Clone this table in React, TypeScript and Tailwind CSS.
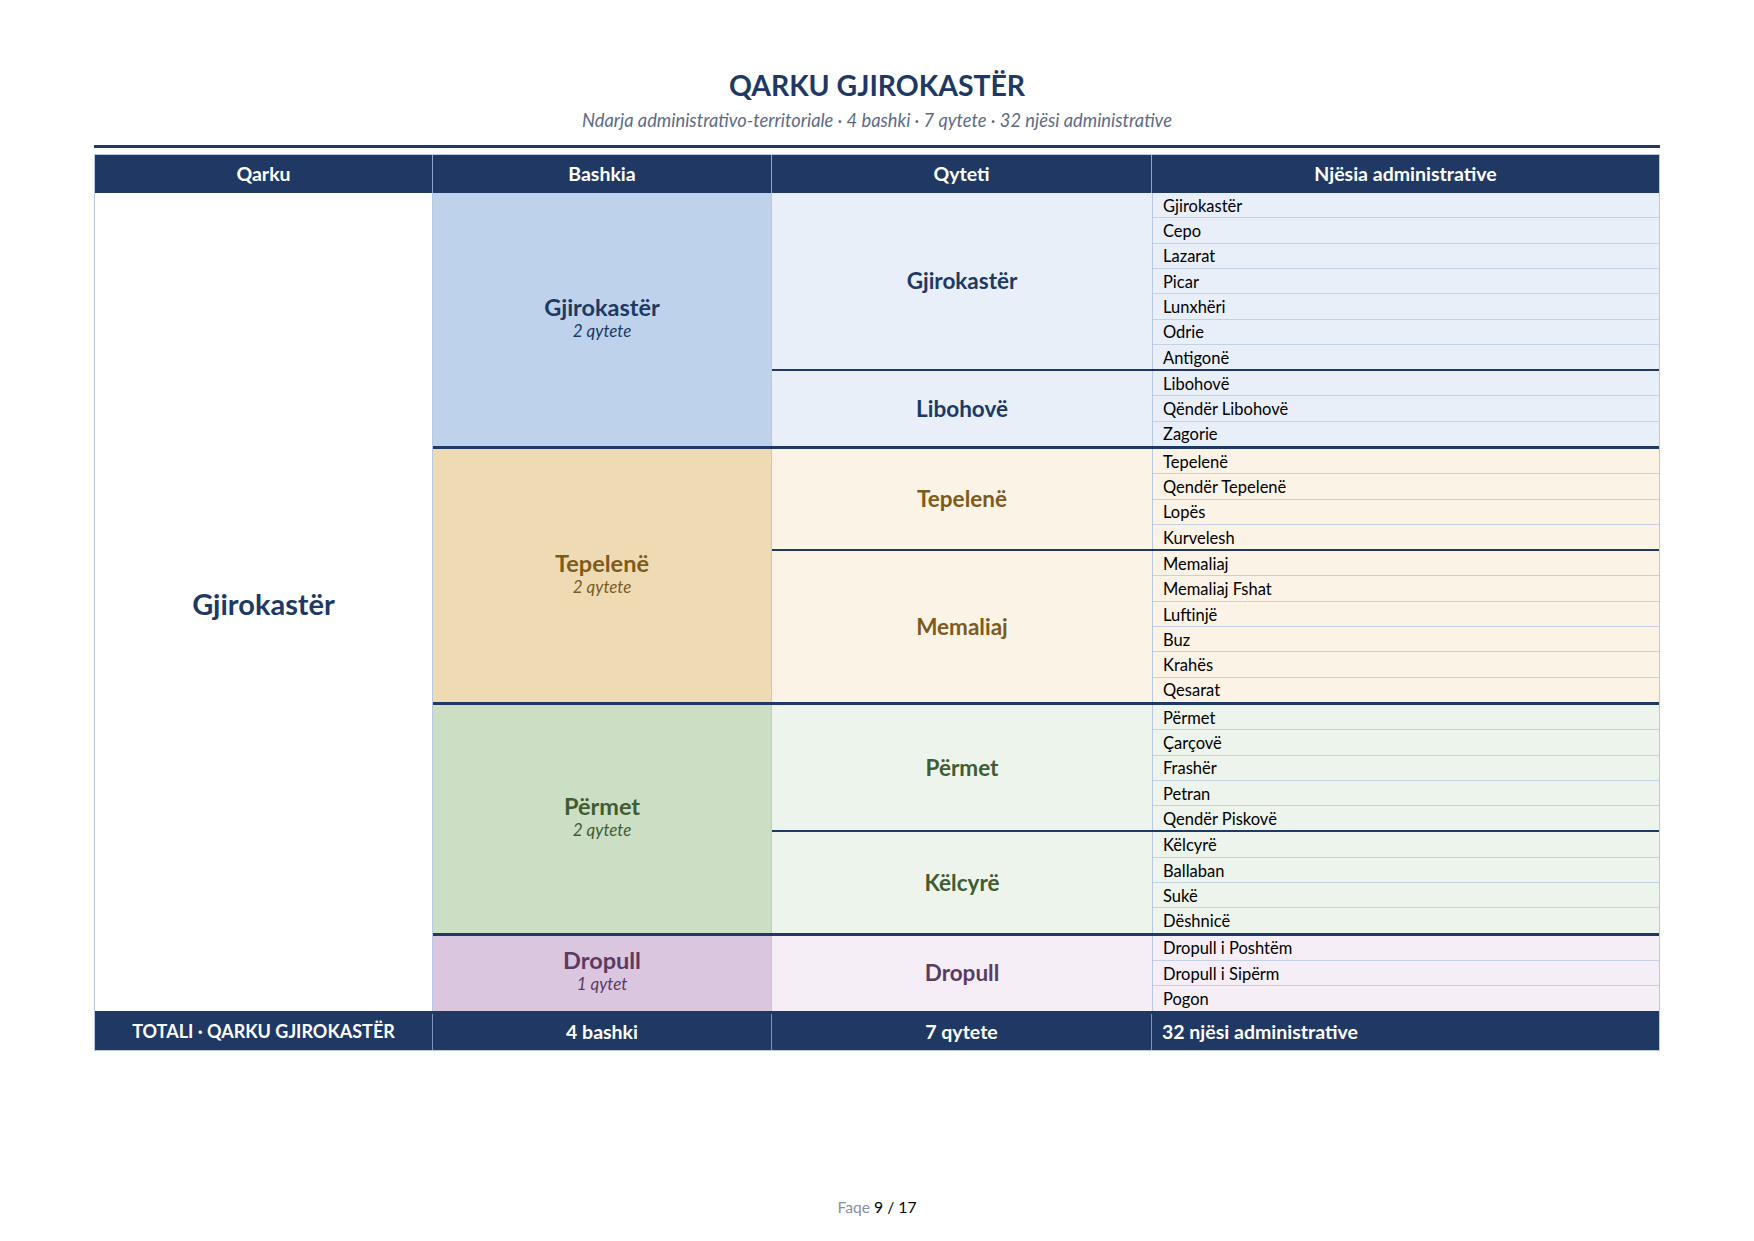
import React from 'react';
import clsx from 'clsx';

interface Theme {
  bashkia: string;
  city: string;
  rows: string;
}

interface City {
  name: string;
  units: string[];
}

interface Bashkia {
  name: string;
  count: string;
  theme: Theme;
  cities: City[];
}

const blue: Theme = {
  bashkia: 'bg-[#bed3eb] text-[#203864]',
  city: 'bg-[#e8eff9] text-[#203864]',
  rows: 'bg-[#e8eff9]',
};
const sand: Theme = {
  bashkia: 'bg-[#eedbb4] text-[#7c5b1c]',
  city: 'bg-[#fbf3e6] text-[#7c5b1c]',
  rows: 'bg-[#fbf3e6]',
};
const green: Theme = {
  bashkia: 'bg-[#ccdfc5] text-[#3f5c33]',
  city: 'bg-[#edf4eb] text-[#3f5c33]',
  rows: 'bg-[#edf4eb]',
};
const violet: Theme = {
  bashkia: 'bg-[#dbc6e0] text-[#5b3b62]',
  city: 'bg-[#f5eef6] text-[#5b3b62]',
  rows: 'bg-[#f5eef6]',
};

const bashkite: Bashkia[] = [
  {
    name: 'Gjirokastër',
    count: '2 qytete',
    theme: blue,
    cities: [
      { name: 'Gjirokastër', units: ['Gjirokastër', 'Cepo', 'Lazarat', 'Picar', 'Lunxhëri', 'Odrie', 'Antigonë'] },
      { name: 'Libohovë', units: ['Libohovë', 'Qëndër Libohovë', 'Zagorie'] },
    ],
  },
  {
    name: 'Tepelenë',
    count: '2 qytete',
    theme: sand,
    cities: [
      { name: 'Tepelenë', units: ['Tepelenë', 'Qendër Tepelenë', 'Lopës', 'Kurvelesh'] },
      { name: 'Memaliaj', units: ['Memaliaj', 'Memaliaj Fshat', 'Luftinjë', 'Buz', 'Krahës', 'Qesarat'] },
    ],
  },
  {
    name: 'Përmet',
    count: '2 qytete',
    theme: green,
    cities: [
      { name: 'Përmet', units: ['Përmet', 'Çarçovë', 'Frashër', 'Petran', 'Qendër Piskovë'] },
      { name: 'Këlcyrë', units: ['Këlcyrë', 'Ballaban', 'Sukë', 'Dëshnicë'] },
    ],
  },
  {
    name: 'Dropull',
    count: '1 qytet',
    theme: violet,
    cities: [{ name: 'Dropull', units: ['Dropull i Poshtëm', 'Dropull i Sipërm', 'Pogon'] }],
  },
];

const App: React.FC = () => {
  return (
    <div className="flex min-h-[1241px] w-full flex-col bg-white font-['Lato','Noto_Sans',sans-serif] text-black">
      <div className="mx-auto w-[1566px] pt-[68px]">
        <h1 className="text-center text-[28.4px] font-bold leading-[1.2] text-[#203864]">QARKU GJIROKASTËR</h1>
        <p className="mt-[8px] text-center text-[18.3px] italic leading-[1.2] text-[#5d6b85]">
          Ndarja administrativo-territoriale · 4 bashki · 7 qytete · 32 njësi administrative
        </p>
        <div className="mt-[13px] h-[3px] bg-[#203864]" />

        <div className="mt-[6px] border border-[#b8c9e1]">
          {/* header */}
          <div className="flex h-[38px] bg-[#203864] text-[19.5px] font-bold text-white">
            <div className="flex w-[337px] items-center justify-center">Qarku</div>
            <div className="flex w-[339px] items-center justify-center border-l border-[#8ea6cc]">Bashkia</div>
            <div className="flex w-[380px] items-center justify-center border-l border-[#8ea6cc]">Qyteti</div>
            <div className="flex flex-1 items-center justify-center border-l border-[#8ea6cc]">Njësia administrative</div>
          </div>

          {/* body */}
          <div className="flex">
            <div className="flex w-[337px] items-center justify-center bg-white pt-[3px] text-[29px] font-bold text-[#203864]">
              Gjirokastër
            </div>
            <div className="flex flex-1 flex-col border-l border-[#b8c9e1]">
              {bashkite.map((b, i) => (
                <div key={b.name} className={clsx('flex', i > 0 && 'border-t-[3px] border-[#203864]')}>
                  <div className={clsx('flex w-[338px] flex-col items-center justify-center pb-[5px]', b.theme.bashkia)}>
                    <div className="text-[23.5px] font-bold leading-[1.15]">{b.name}</div>
                    <div className="text-[17px] italic leading-[1.15]">{b.count}</div>
                  </div>
                  <div className="flex flex-1 flex-col border-l border-[#b8c9e1]">
                    {b.cities.map((c, j) => (
                      <div key={c.name} className={clsx('flex', j > 0 && 'border-t-2 border-[#203864]')}>
                        <div className={clsx('flex w-[380px] items-center justify-center text-[22.5px] font-bold', b.theme.city)}>
                          {c.name}
                        </div>
                        <div className={clsx('flex-1 border-l border-[#b8c9e1]', b.theme.rows)}>
                          {c.units.map((u, k) => (
                            <div
                              key={u}
                              className={clsx(
                                'flex items-center pl-[10px] pt-[3px] text-[16.5px] leading-[1.2]',
                                k > 0 ? 'h-[25.3px] border-t border-[#c3d1e6]' : 'h-[24.3px]'
                              )}
                            >
                              {u}
                            </div>
                          ))}
                        </div>
                      </div>
                    ))}
                  </div>
                </div>
              ))}
            </div>
          </div>

          {/* totals */}
          <div className="flex h-[39px] bg-[#203864] pt-[3px] text-[19.5px] font-bold text-white">
            <div className="flex w-[337px] items-center justify-center text-[18px]">TOTALI · QARKU GJIROKASTËR</div>
            <div className="flex w-[339px] items-center justify-center border-l border-[#7d95bd]">4 bashki</div>
            <div className="flex w-[380px] items-center justify-center border-l border-[#7d95bd]">7 qytete</div>
            <div className="flex flex-1 items-center border-l border-[#7d95bd] pl-[10px]">32 njësi administrative</div>
          </div>
        </div>
      </div>

      <div className="mt-auto pb-[24px] text-center text-[15.7px] leading-[1.2]">
        <span className="text-[#8490a8]">Faqe</span> <span className="text-black">9 / 17</span>
      </div>
    </div>
  );
};

export default App;
